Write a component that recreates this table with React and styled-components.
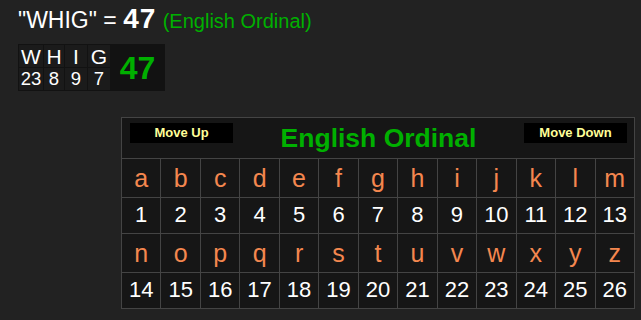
import React from "react";
import styled, { createGlobalStyle } from "styled-components";

const GlobalStyle = createGlobalStyle`
  html, body {
    margin: 0;
    padding: 0;
    background: #222222;
  }
  body {
    font-family: "Liberation Sans", Arial, sans-serif;
    color: #ffffff;
    min-height: 320px;
  }
`;

const GREEN = "#00b000";
const ORANGE = "#f4874f";

const Page = styled.div`
  padding: 5px 0 0 18px;
`;

const Headline = styled.div`
  font-size: 23px;
  line-height: 30px;
  white-space: nowrap;
`;

const HeadTotal = styled.span`
  font-weight: bold;
  font-size: 28px;
  letter-spacing: 1px;
  line-height: 1;
`;

const HeadMethod = styled.span`
  color: ${GREEN};
  font-size: 20px;
  line-height: 1;
`;

const WordBox = styled.div`
  margin-top: 9px;
  display: inline-grid;
  grid-template-columns: 24px 20px 22px 22px 53px;
  grid-template-rows: 22px 22px;
  gap: 1px;
  padding: 1px;
  background: #121212;
`;

const WordCell = styled.div`
  background: #1b1b1b;
  display: flex;
  align-items: center;
  justify-content: center;
  line-height: 1;
  font-size: ${(p) => (p.$num ? "18.5px" : "21px")};
  color: #ffffff;
`;

const WordSum = styled.div`
  grid-column: 5;
  grid-row: 1 / span 2;
  display: flex;
  align-items: center;
  justify-content: center;
  color: ${GREEN};
  font-weight: bold;
  font-size: 32px;
  line-height: 1;
`;

const Chart = styled.div`
  margin: 26px 0 0 103px;
  width: 514px;
  box-sizing: border-box;
  display: grid;
  grid-template-columns: repeat(13, 1fr);
  grid-template-rows: 40px 38px 35px 38px 35px;
  gap: 1px;
  padding: 1px;
  background: #444444;
`;

const ChartHeader = styled.div`
  grid-column: 1 / -1;
  background: #161616;
  display: flex;
  justify-content: space-between;
  align-items: flex-start;
  padding: 5px 7px 0 8px;
`;

const MoveButton = styled.button`
  width: 103px;
  height: 20px;
  padding: 0;
  border: none;
  background: #000000;
  color: #ffff99;
  font-family: "Liberation Sans", Arial, sans-serif;
  font-weight: bold;
  font-size: 13px;
  line-height: 20px;
  text-align: center;
  cursor: pointer;
`;

const ChartTitle = styled.div`
  margin-top: 2px;
  color: ${GREEN};
  font-weight: bold;
  font-size: 26.5px;
  line-height: 1;
  white-space: nowrap;
`;

const Cell = styled.div`
  background: #161616;
  display: flex;
  align-items: center;
  justify-content: center;
  line-height: 1;
  font-size: ${(p) => (p.$letter ? "25px" : "22px")};
  color: ${(p) => (p.$letter ? ORANGE : "#ffffff")};
  padding-bottom: ${(p) => (p.$letter ? "0" : "2px")};
`;

const word = [
  ["W", 23],
  ["H", 8],
  ["I", 9],
  ["G", 7],
];

const alphabet = "abcdefghijklmnopqrstuvwxyz".split("");

export default function App() {
  const halves = [alphabet.slice(0, 13), alphabet.slice(13)];
  return (
    <>
      <GlobalStyle />
      <Page>
        <Headline>
          "WHIG" = <HeadTotal>47</HeadTotal>{" "}
          <HeadMethod>(English Ordinal)</HeadMethod>
        </Headline>
        <WordBox>
          {word.map(([ch]) => (
            <WordCell key={ch}>{ch}</WordCell>
          ))}
          <WordSum>47</WordSum>
          {word.map(([ch, n]) => (
            <WordCell key={ch + n} $num>
              {n}
            </WordCell>
          ))}
        </WordBox>
        <Chart>
          <ChartHeader>
            <MoveButton>Move Up</MoveButton>
            <ChartTitle>English Ordinal</ChartTitle>
            <MoveButton>Move Down</MoveButton>
          </ChartHeader>
          {halves.map((half, h) => (
            <React.Fragment key={h}>
              {half.map((ch) => (
                <Cell key={ch} $letter>
                  {ch}
                </Cell>
              ))}
              {half.map((ch, i) => (
                <Cell key={ch + "n"}>{h * 13 + i + 1}</Cell>
              ))}
            </React.Fragment>
          ))}
        </Chart>
      </Page>
    </>
  );
}
